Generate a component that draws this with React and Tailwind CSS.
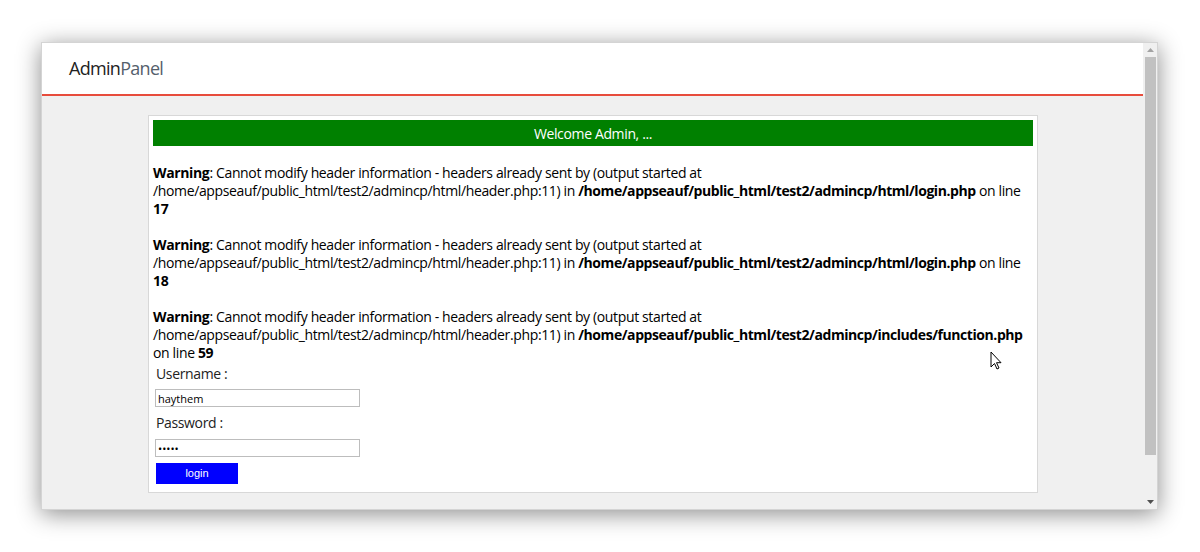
import React from 'react';

const path1 = '/home/appseauf/public_html/test2/admincp/html/header.php:11)';

const Warning = ({ file, line }) => (
  <>
    <br />
    <b className="font-bold">Warning</b>: Cannot modify header information - headers already sent by (output started at {path1} in{' '}
    <b className="font-bold tracking-[-0.43px]">{file}</b> on line <b className="font-bold">{line}</b>
    <br />
  </>
);

export default function App() {
  return (
    <div className="w-[1200px] h-[552px] bg-white pt-[42px] pl-[41px] overflow-hidden" style={{ fontFamily: '"Open Sans", sans-serif' }}>
      <div className="relative w-[1117px] h-[468px] flex border border-[#d4d4d4] shadow-[0_4px_22px_rgba(0,0,0,0.45)] bg-[#f0f0f0]">
        <div className="flex-1 flex flex-col">
          <div className="h-[53px] bg-white border-b-2 border-[#e74c3c] flex items-center pl-[27px]">
            <span className="text-[18px] text-[#222] tracking-[-0.7px]">
              Admin<span className="text-[#55606c]">Panel</span>
            </span>
          </div>
          <div className="pt-[19px] pl-[106px] tracking-[-0.36px]">
            <div className="w-[890px] bg-white border border-[#d8d8d8] p-[4px] pb-[8px]">
              <div className="h-[26px] bg-[#008000] text-white text-[14px] flex items-center justify-center">
                Welcome Admin, ...
              </div>
              <div className="text-[14px] leading-[18px] text-black">
                <Warning file="/home/appseauf/public_html/test2/admincp/html/login.php" line="17" />
                <Warning file="/home/appseauf/public_html/test2/admincp/html/login.php" line="18" />
                <Warning file="/home/appseauf/public_html/test2/admincp/includes/function.php" line="59" />
              </div>
              <div className="pl-[3px] text-[#222]">
                <div className="text-[14px] leading-[18px] mt-[3px]">Username :</div>
                <input
                  readOnly
                  value="haythem"
                  className="mt-[6px] -ml-px block w-[205px] h-[18px] border border-[#bdbdbd] bg-white px-[2px] text-[11px] text-black outline-none tracking-normal"
                />
                <div className="text-[14px] leading-[18px] mt-[7px]">Password :</div>
                <input
                  readOnly
                  type="password"
                  value="12345"
                  className="mt-[7px] -ml-px block w-[205px] h-[18px] border border-[#bdbdbd] bg-white px-[2px] text-[11px] text-black outline-none tracking-normal"
                />
                <button className="mt-[6px] block w-[82px] h-[21px] bg-[#0000ff] text-white text-[11px] tracking-normal" style={{ fontFamily: '"Liberation Sans", Arial, sans-serif' }}>
                  login
                </button>
              </div>
            </div>
          </div>
        </div>
        <div className="w-[14px] bg-[#f0f0f0] flex flex-col items-center">
          <div className="h-[14px] flex items-center justify-center">
            <svg width="7" height="5" viewBox="0 0 7 5"><path d="M3.5 0L7 4H0z" fill="#a3a3a3" /></svg>
          </div>
          <div className="w-[11px] h-[398px] bg-[#c1c1c1]" />
          <div className="flex-1" />
          <div className="h-[14px] flex items-center justify-center">
            <svg width="7" height="5" viewBox="0 0 7 5"><path d="M0 0h7L3.5 4z" fill="#505050" /></svg>
          </div>
        </div>
        <svg className="absolute left-[948px] top-[308px]" width="13" height="20" viewBox="0 0 13 20">
          <path d="M1 1v15l3.5-3.5 2.5 5.5 2-1-2.5-5.3H11z" fill="white" stroke="black" strokeWidth="1" strokeLinejoin="round" />
        </svg>
      </div>
    </div>
  );
}
